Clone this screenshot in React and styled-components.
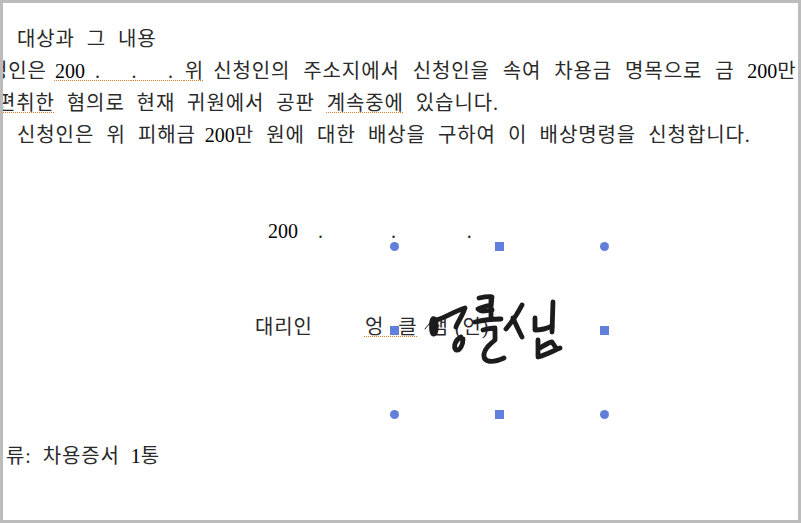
import React from "react";
import styled, { createGlobalStyle } from "styled-components";

const GlobalStyle = createGlobalStyle`
  html, body {
    margin: 0;
    padding: 0;
    background: #fff;
  }
`;

const Frame = styled.div`
  position: relative;
  box-sizing: border-box;
  width: 801px;
  height: 523px;
  border: 3px solid #bcbcbc;
  overflow: hidden;
  background: #fff;
  font-family: "Liberation Serif", "Noto Sans CJK KR", serif;
  font-size: 20px;
  letter-spacing: 0.9px;
  color: #2a2a2a;
`;

const Page = styled.div`
  display: flex;
  flex-direction: column;
  padding-top: 20px;
`;

const Line = styled.div`
  height: 32px;
  line-height: 32px;
  white-space: nowrap;
  margin-left: ${(p) => p.$indent || 0}px;
  margin-top: ${(p) => p.$gap || 0}px;
  word-spacing: ${(p) => p.$words || 0}px;
`;

const Num = styled.span`
  letter-spacing: 0;
  color: #000;
`;

const Squiggle = styled.span`
  text-decoration: underline dotted #d9822b 1px;
  text-underline-offset: 2px;
`;

// a no-break space stretched to a set width, so the underline runs across it
const GapText = styled.span`
  word-spacing: ${(p) => p.$width - 5.9}px;
`;

const Gap = ({ $width }) => <GapText $width={$width}>{"\u00A0"}</GapText>;

const Handle = styled.div`
  position: absolute;
  left: ${(p) => p.$x - 5}px;
  top: ${(p) => p.$y - 5}px;
  width: 9px;
  height: 9px;
  background: #5f7fdb;
  border-radius: ${(p) => (p.$round ? "50%" : "0")};
`;

const Signature = styled.svg`
  position: absolute;
  left: 417px;
  top: 282px;
  width: 150px;
  height: 85px;
  fill: none;
  stroke: #1c1c1c;
  stroke-width: 4.8;
  stroke-linecap: round;
  stroke-linejoin: round;
  filter: blur(0.35px);
`;

const handles = [
  { x: 392, y: 244, round: true },
  { x: 497, y: 244 },
  { x: 602, y: 244, round: true },
  { x: 392, y: 328 },
  { x: 602, y: 328 },
  { x: 392, y: 412, round: true },
  { x: 497, y: 412 },
  { x: 602, y: 412, round: true },
];

export default function App() {
  return (
    <Frame>
      <GlobalStyle />
      <Page>
        <Line $indent={14} $words={6}>대상과 그 내용</Line>
        <Line $indent={-14} $words={7}>
          청인은<Gap $width={8} /><Squiggle><Num>200</Num><Gap $width={10} />.<Gap $width={30.6} />.<Gap $width={30.6} />.<Gap $width={11} />위</Squiggle><Gap $width={9} />신청인의 주소지에서 신청인을 속여 차용금 명목으로 금 <Num>200</Num>만
        </Line>
        <Line $indent={-6} $words={6}>
          <Squiggle>편취한</Squiggle> 혐의로 현재 귀원에서 공판 <Squiggle>계속중에</Squiggle> 있습니다.
        </Line>
        <Line $indent={14} $words={6.3}>신청인은 위 피해금<Gap $width={9} /><Num>200</Num>만 원에 대한 배상을 구하여 이 배상명령을 신청합니다.</Line>
        <Line $indent={265} $gap={64}>
          <Num>200</Num><Gap $width={20} />.<Gap $width={67} />.<Gap $width={70} />.
        </Line>
        <Line $indent={252} $gap={64}>
          대리인<Gap $width={52} /><Squiggle>엉<Gap $width={14} />클</Squiggle><Gap $width={12} />샘<Gap $width={6} />(인)
        </Line>
        <Line $indent={3} $gap={97} $words={5}>류: 차용증서 <Num>1</Num>통</Line>
      </Page>
      {handles.map((h) => (
        <Handle key={`${h.x}-${h.y}`} $x={h.x} $y={h.y} $round={h.round} />
      ))}
      <Signature viewBox="0 0 150 85">
        <path d="M5 44 L13 34" strokeWidth="1" />
        <path d="M13 34 C17 32 17 48 14 49 C11 50 11 36 13 34" strokeWidth="5" />
        <path d="M16 35 C24 34 34 26 45 23 C42 32 37 38 36 42" />
        <path d="M41 52 C35 55 33 62 36 65 C40 66 43 60 43 54" />
        <path d="M59 13 C64 12 69 11 72 12 L71 20 C66 21 61 22 58 24 C60 27 66 26 72 25" />
        <path d="M55 37 C63 35 73 34 81 34" />
        <path d="M71 12 L71 34" />
        <path d="M63 45 C67 44 72 43 75 43 L75 55 C70 59 65 63 64 69 C63 78 73 78 84 73" />
        <path d="M102 20 C98 28 91 38 86 44" />
        <path d="M93 33 C96 40 99 46 102 52" />
        <path d="M115 33 L115 45 C122 45 128 43 132 41" />
        <path d="M133 17 L132 47" />
        <path d="M118 55 L118 72 C126 70 133 66 140 63" />
        <path d="M120 63 C125 60 129 57 132 57 L136 63" />
      </Signature>
    </Frame>
  );
}
